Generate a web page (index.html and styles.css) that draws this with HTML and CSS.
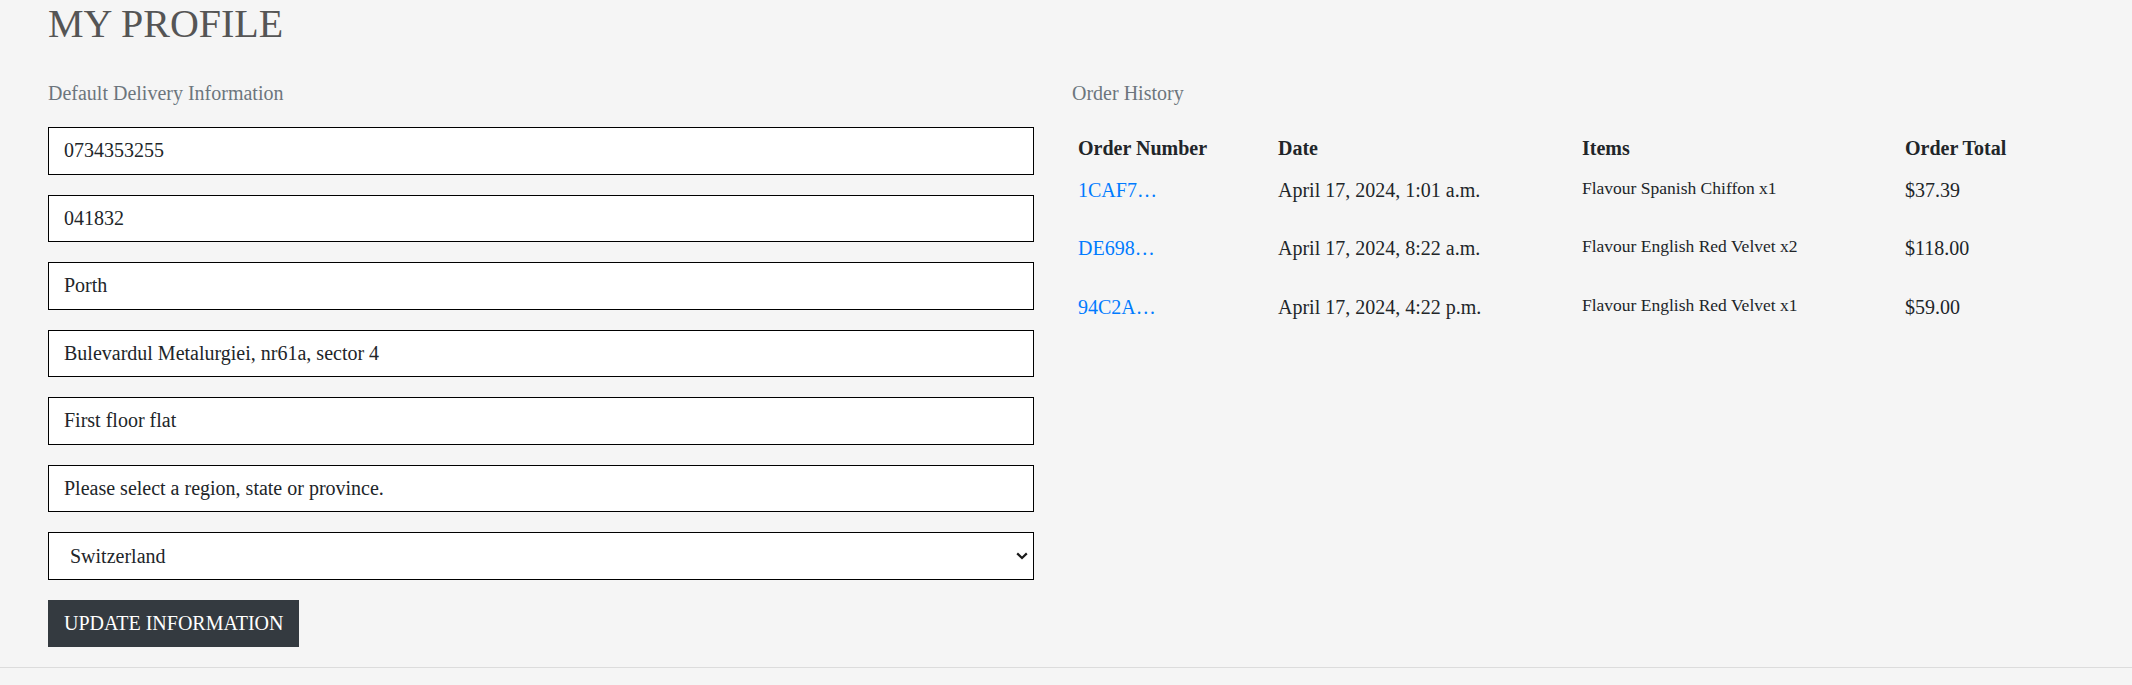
FILE: index.html
```html
<!DOCTYPE html>
<html lang="en">
<head>
<meta charset="utf-8">
<title>My Profile</title>
<link rel="stylesheet" href="styles.css">
</head>
<body>
<main class="profile">
  <h1 class="profile-title">MY PROFILE</h1>
  <div class="profile-grid">
    <section class="delivery">
      <h2 class="section-label">Default Delivery Information</h2>
      <form class="delivery-form">
        <input class="field" type="text" value="0734353255">
        <input class="field" type="text" value="041832">
        <input class="field" type="text" value="Porth">
        <input class="field" type="text" value="Bulevardul Metalurgiei, nr61a, sector 4">
        <input class="field" type="text" value="First floor flat">
        <input class="field" type="text" value="Please select a region, state or province.">
        <div class="select-wrap">
          <select class="field field-select">
            <option>Switzerland</option>
          </select>
          <svg class="select-arrow" width="12" height="8" viewBox="0 0 12 8" aria-hidden="true">
            <path d="M1.2 1.4 L6 6 L10.8 1.4" fill="none" stroke="#1a1a1a" stroke-width="2.2"/>
          </svg>
        </div>
        <button class="btn-dark" type="button">UPDATE INFORMATION</button>
      </form>
    </section>
    <section class="history">
      <h2 class="section-label">Order History</h2>
      <table class="orders">
        <colgroup>
          <col class="col-number">
          <col class="col-date">
          <col class="col-items">
          <col class="col-total">
        </colgroup>
        <thead>
          <tr>
            <th>Order Number</th>
            <th>Date</th>
            <th>Items</th>
            <th>Order Total</th>
          </tr>
        </thead>
        <tbody>
          <tr>
            <td><a class="order-link" href="#">1CAF7…</a></td>
            <td>April 17, 2024, 1:01 a.m.</td>
            <td><p class="item-line">Flavour Spanish Chiffon x1</p></td>
            <td>$37.39</td>
          </tr>
          <tr>
            <td><a class="order-link" href="#">DE698…</a></td>
            <td>April 17, 2024, 8:22 a.m.</td>
            <td><p class="item-line">Flavour English Red Velvet x2</p></td>
            <td>$118.00</td>
          </tr>
          <tr>
            <td><a class="order-link" href="#">94C2A…</a></td>
            <td>April 17, 2024, 4:22 p.m.</td>
            <td><p class="item-line">Flavour English Red Velvet x1</p></td>
            <td>$59.00</td>
          </tr>
        </tbody>
      </table>
    </section>
  </div>
</main>
<footer class="page-footer"></footer>
</body>
</html>
```

FILE: styles.css
```css
* {
  box-sizing: border-box;
}

html, body {
  margin: 0;
  padding: 0;
}

body {
  background: #f5f5f5;
  color: #212529;
  font-family: "Liberation Serif", "Times New Roman", serif;
  font-size: 20px;
  min-height: 685px;
}

.profile {
  padding: 0 0 20px 48px;
}

.profile-title {
  margin: 0;
  font-size: 40px;
  line-height: 48px;
  font-weight: normal;
  color: #555555;
}

.profile-grid {
  margin-top: 33px;
  display: grid;
  grid-template-columns: 986px 986px;
  column-gap: 38px;
}

.section-label {
  margin: 0 0 22px;
  font-size: 20px;
  line-height: 24px;
  font-weight: normal;
  color: #6c757d;
}

.delivery-form {
  display: flex;
  flex-direction: column;
  align-items: flex-start;
  margin: 0;
}

.field {
  display: block;
  width: 100%;
  height: 47.5px;
  margin: 0 0 20px;
  padding: 7.5px 15px;
  border: 1px solid #000000;
  border-radius: 0;
  background: #ffffff;
  color: #212529;
  font-family: "Liberation Serif", "Times New Roman", serif;
  font-size: 20px;
  line-height: 30px;
  outline: none;
}

.select-wrap {
  position: relative;
  width: 100%;
}

.field-select {
  -webkit-appearance: none;
  appearance: none;
  padding-left: 21px;
}

.select-arrow {
  position: absolute;
  right: 6px;
  top: 19.5px;
  pointer-events: none;
}

.btn-dark {
  height: 47.5px;
  margin: 0;
  padding: 0 15px;
  border: 1px solid #343a40;
  border-radius: 0;
  background: #343a40;
  color: #ffffff;
  font-family: "Liberation Serif", "Times New Roman", serif;
  font-size: 20px;
  line-height: 30px;
  cursor: pointer;
}

.orders {
  width: 100%;
  table-layout: fixed;
  border-collapse: collapse;
}

.col-number { width: 200px; }
.col-date { width: 304px; }
.col-items { width: 323px; }

.orders th,
.orders td {
  padding: 6px;
  text-align: left;
  vertical-align: top;
  font-size: 20px;
  line-height: 30px;
  color: #212529;
}

.orders th {
  font-weight: bold;
}

.order-link {
  color: #007bff;
  text-decoration: none;
}

.item-line {
  margin: 0 0 20px;
  font-size: 17.5px;
  line-height: 26.25px;
}

.page-footer {
  border-top: 1px solid #dcdcdc;
  height: 17px;
}
```
